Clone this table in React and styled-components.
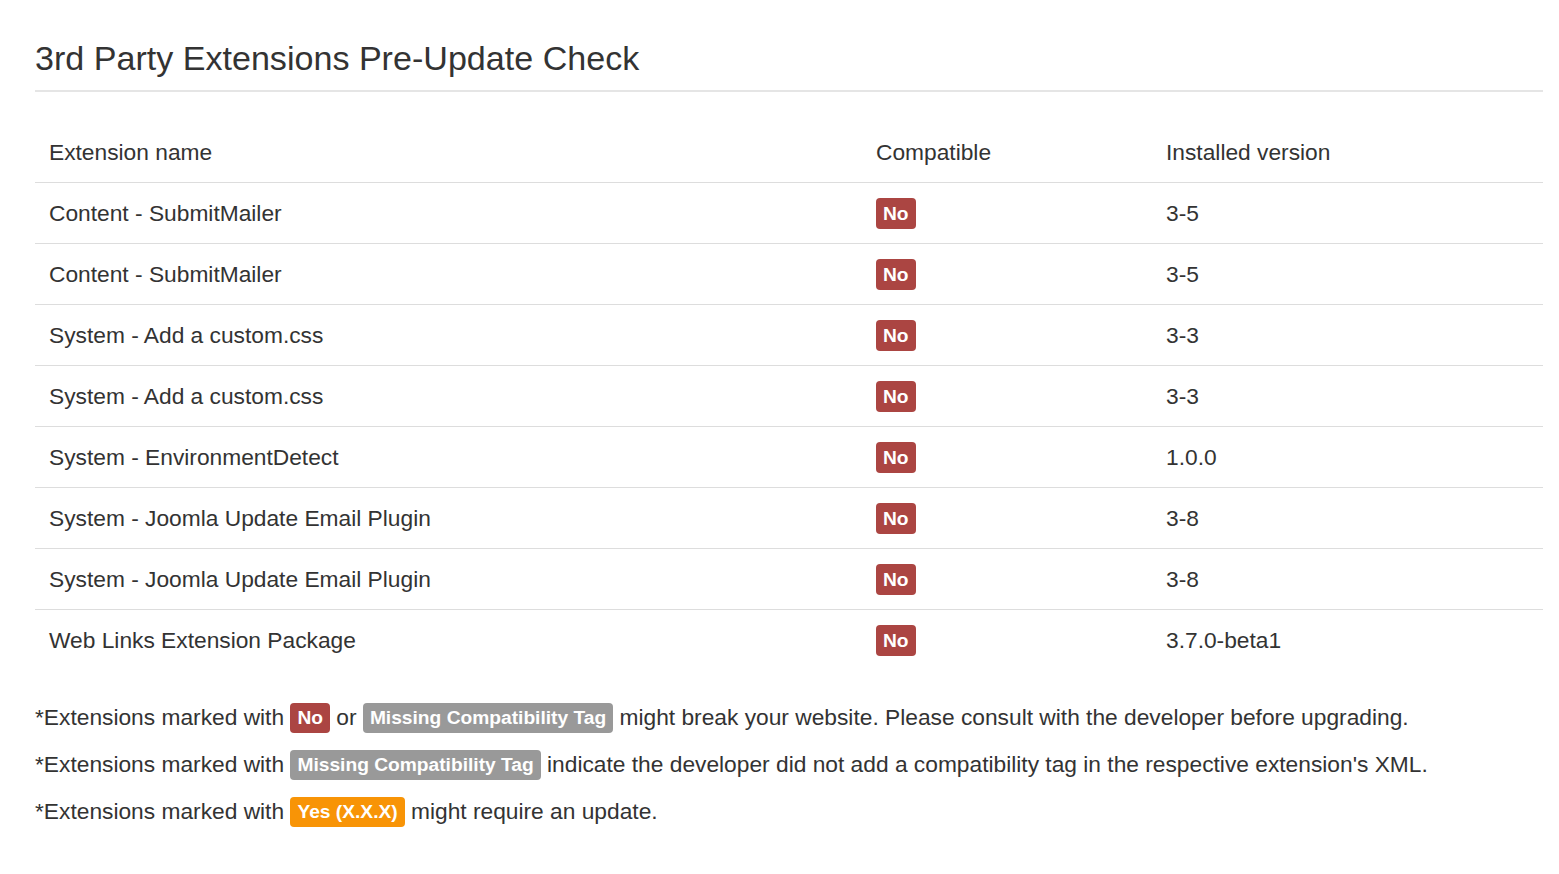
import styled, { createGlobalStyle } from 'styled-components'

const GlobalStyle = createGlobalStyle`
  body {
    margin: 0;
    background: #fff;
    font-family: "Liberation Sans", Arial, sans-serif;
    color: #333;
  }
`

const Page = styled.div`
  padding: 20px 16px 40px 35px;
`

const Title = styled.h2`
  margin: 18px 0 0;
  padding-bottom: 12px;
  font-size: 34.1px;
  line-height: 40px;
  font-weight: 400;
  color: #333;
  border-bottom: 2px solid #e5e5e5;
`

const Table = styled.table`
  width: 100%;
  margin-top: 31px;
  border-collapse: collapse;
  table-layout: fixed;
  font-size: 22.75px;
`

const HeadCell = styled.th`
  height: 59px;
  padding: 0 14px;
  text-align: left;
  font-weight: 400;
  vertical-align: middle;
  border-bottom: 1px solid #ddd;
`

const Row = styled.tr`
  & + & td {
    border-top: 1px solid #ddd;
  }
`

const Cell = styled.td`
  height: 60px;
  padding: 0 14px;
  vertical-align: middle;
`

const colours = {
  danger: '#ab4542',
  muted: '#999',
  warning: '#f89406',
}

const Badge = styled.span`
  display: inline-block;
  padding: 0 7px;
  height: 31px;
  line-height: 31px;
  border-radius: 4px;
  font-size: 19.2px;
  font-weight: 700;
  color: #fff;
  vertical-align: middle;
  background: ${p => colours[p.$tone]};
`

const Notes = styled.div`
  margin-top: 32px;
  font-size: 22.75px;
`

const Note = styled.p`
  margin: 0 0 15px;
  line-height: 31px;

  ${Badge} {
    height: 30px;
    line-height: 30px;
    vertical-align: 0;
    position: relative;
    top: -1px;
  }
`

const extensions = [
  ['Content - SubmitMailer', '3-5'],
  ['Content - SubmitMailer', '3-5'],
  ['System - Add a custom.css', '3-3'],
  ['System - Add a custom.css', '3-3'],
  ['System - EnvironmentDetect', '1.0.0'],
  ['System - Joomla Update Email Plugin', '3-8'],
  ['System - Joomla Update Email Plugin', '3-8'],
  ['Web Links Extension Package', '3.7.0-beta1'],
]

const App = () => {
  return (
    <Page>
      <GlobalStyle />
      <Title>3rd Party Extensions Pre-Update Check</Title>
      <Table>
        <colgroup>
          <col style={{ width: '827px' }} />
          <col style={{ width: '290px' }} />
          <col />
        </colgroup>
        <thead>
          <tr>
            <HeadCell>Extension name</HeadCell>
            <HeadCell>Compatible</HeadCell>
            <HeadCell>Installed version</HeadCell>
          </tr>
        </thead>
        <tbody>
          {extensions.map(([name, version], i) => (
            <Row key={i}>
              <Cell>{name}</Cell>
              <Cell><Badge $tone="danger">No</Badge></Cell>
              <Cell>{version}</Cell>
            </Row>
          ))}
        </tbody>
      </Table>
      <Notes>
        <Note>
          *Extensions marked with <Badge $tone="danger">No</Badge> or <Badge $tone="muted">Missing Compatibility Tag</Badge> might break your website. Please consult with the developer before upgrading.
        </Note>
        <Note>
          *Extensions marked with <Badge $tone="muted">Missing Compatibility Tag</Badge> indicate the developer did not add a compatibility tag in the respective extension's XML.
        </Note>
        <Note>
          *Extensions marked with <Badge $tone="warning">Yes (X.X.X)</Badge> might require an update.
        </Note>
      </Notes>
    </Page>
  )
}

export default App
